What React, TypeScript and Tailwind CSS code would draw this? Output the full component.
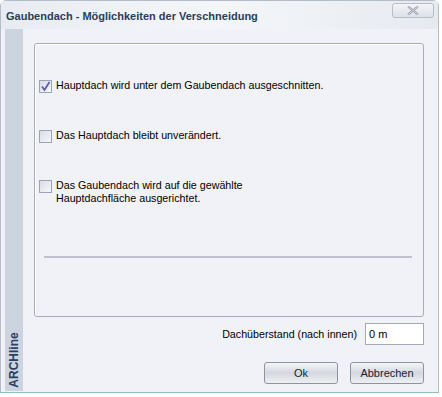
import React from "react";

const font = { fontFamily: '"Liberation Sans", Arial, sans-serif' };

function CheckBox({ checked }: { checked?: boolean }) {
  return (
    <span className="relative flex h-[13px] w-[13px] shrink-0 items-center justify-center border border-[#9ca4b4] bg-gradient-to-br from-[#d8dce6] to-[#f6f7fa]">
      {checked && (
        <svg width="11" height="11" viewBox="0 0 11 11" className="absolute">
          <path d="M2 5.5 L4.5 9 L9.5 1" stroke="#5a5cb4" strokeWidth="1.8" fill="none" />
        </svg>
      )}
    </span>
  );
}

function Option({ checked, lines }: { checked?: boolean; lines: string[] }) {
  return (
    <div className="flex items-start gap-[4px]">
      <div className="mt-[1px]">
        <CheckBox checked={checked} />
      </div>
      <div className="text-[10.7px] leading-[13px] text-black">
        {lines.map((l) => (
          <div key={l}>{l}</div>
        ))}
      </div>
    </div>
  );
}

function DlgButton({ label }: { label: string }) {
  return (
    <button className="flex h-[22px] w-[74px] items-center justify-center rounded-[3px] border border-[#8e949e] bg-gradient-to-b from-[#f4f5f7] via-[#d4d8de] to-[#eef0f3] text-[11px] text-[#1a2230]">
      {label}
    </button>
  );
}

export default function App() {
  return (
    <div className="h-[397px] w-[442px] bg-white" style={font}>
      <div className="flex h-[393px] w-[439px] flex-col rounded-t-[6px] border border-[#b4bcc8] border-b-[#8cc0b8] bg-[#f0f2f7]">
        {/* Titelleiste */}
        <div className="flex h-[28px] items-start justify-between bg-gradient-to-r from-[#e8ecf2] via-[#f4f6f9] to-[#e6eaf0] pl-[5px] pr-[4px]">
          <span className="mt-[8px] text-[11px] font-bold leading-[14px] text-[#2a3e5c]">
            Gaubendach - Möglichkeiten der Verschneidung
          </span>
          <button className="mt-[2px] flex h-[15px] w-[42px] items-center justify-center rounded-[3px] border border-[#b8bec8] bg-gradient-to-b from-[#f2f4f7] to-[#dde1e8]">
            <svg width="12" height="9" viewBox="0 0 12 9">
              <path d="M1 0.5 L11 8.5 M11 0.5 L1 8.5" stroke="#8a92a0" strokeWidth="2" fill="none" />
              <path d="M1 0.5 L11 8.5 M11 0.5 L1 8.5" stroke="#f4f5f8" strokeWidth="0.7" fill="none" />
            </svg>
          </button>
        </div>

        <div className="flex flex-1 pb-[1px] pl-[4px]">
          {/* Seitenleiste */}
          <div className="flex w-[18px] flex-col justify-end bg-[#ccd4e0] pb-[4px]">
            <div className="flex h-[54px] items-center justify-center">
              <span className="-rotate-90 whitespace-nowrap text-[12px] font-bold text-[#2c3e62]">
                ARCHline
              </span>
            </div>
          </div>

          {/* Inhalt */}
          <div className="flex flex-1 flex-col pl-[11px] pr-[14px] pt-[14px]">
            <div className="flex h-[274px] flex-col rounded-[3px] border border-[#a8acb6] px-[4px] pt-[35px] shadow-[inset_1px_1px_0_#ffffff]">
              <div className="flex flex-col gap-[36px]">
                <Option checked lines={["Hauptdach wird unter dem Gaubendach ausgeschnitten."]} />
                <Option lines={["Das Hauptdach bleibt unverändert."]} />
                <Option lines={["Das Gaubendach wird auf die gewählte", "Hauptdachfläche ausgerichtet."]} />
              </div>
              <div className="ml-[5px] mr-[7px] mt-[51px] h-[2px] bg-[#c0c0d0]" />
            </div>

            <div className="mt-[6px] flex items-center justify-end gap-[8px]">
              <span className="text-[10.7px] text-black">Dachüberstand (nach innen)</span>
              <div className="flex h-[22px] w-[59px] items-center border border-[#a4aab4] bg-white px-[3px] text-[11px] text-black">
                0 m
              </div>
            </div>

            <div className="mt-[17px] flex justify-end gap-[12px]">
              <DlgButton label="Ok" />
              <DlgButton label="Abbrechen" />
            </div>
          </div>
        </div>
      </div>
    </div>
  );
}
